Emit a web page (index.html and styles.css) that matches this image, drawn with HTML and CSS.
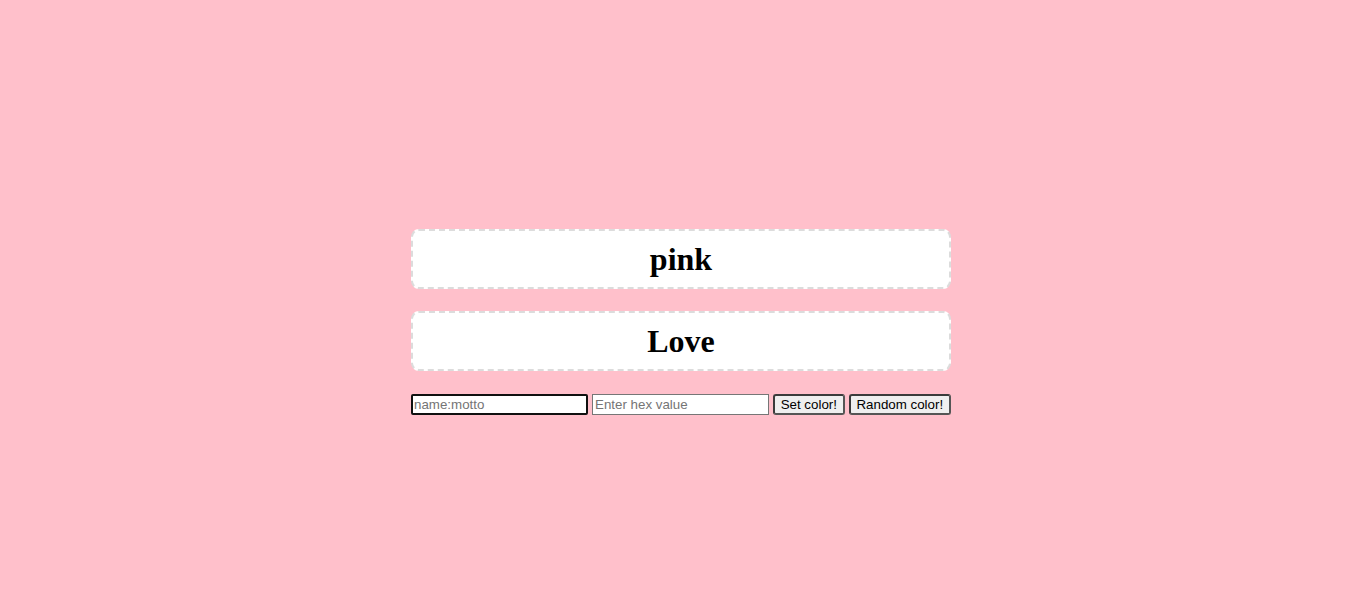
FILE: index.html
```html
<!DOCTYPE html>
<html>
<head>
<meta charset="utf-8">
<title>Color</title>
<link rel="stylesheet" href="styles.css">
</head>
<body>
<main class="wrap">
  <div class="card"><h1 class="title">pink</h1></div>
  <div class="card"><h1 class="title">Love</h1></div>
  <form class="controls">
    <input class="field focused" type="text" placeholder="name:motto">
    <input class="field" type="text" placeholder="Enter hex value">
    <button class="btn set" type="button">Set color!</button>
    <button class="btn random" type="button">Random color!</button>
  </form>
</main>
</body>
</html>
```
FILE: styles.css
```css
html, body {
  margin: 0;
  height: 100%;
  background: #ffc0cb;
}
body {
  font-family: "Liberation Serif", "Times New Roman", serif;
  display: flex;
  justify-content: center;
  padding-left: 17px;
  box-sizing: border-box;
}
.wrap {
  width: 540px;
  padding-top: 229px;
  display: flex;
  flex-direction: column;
  gap: 22px;
}
.card {
  box-sizing: border-box;
  height: 60px;
  background: #fff;
  border: 2px dashed #dcdcdc;
  border-radius: 8px;
  display: flex;
  align-items: center;
  justify-content: center;
}
.title {
  margin: 0;
  font-size: 32px;
  font-weight: bold;
  color: #000;
}
.controls {
  display: flex;
  gap: 4px;
  margin: 1px 0 0;
}
.field {
  box-sizing: border-box;
  width: 177px;
  height: 21px;
  margin: 0;
  padding: 1px 2px;
  font: 13.333px "Liberation Sans", Arial, sans-serif;
  border: 1px solid #767676;
  border-radius: 0;
  background: #fff;
}
.field::placeholder {
  color: #757575;
}
.field.focused {
  border: 2px solid #101010;
  border-radius: 2px;
  padding: 0 1px;
}
.btn {
  box-sizing: border-box;
  height: 21px;
  margin: 0;
  padding: 0;
  white-space: nowrap;
  font: 13.333px "Liberation Sans", Arial, sans-serif;
  color: #000;
  background: #efefef;
  border: 2px solid #3b3b3b;
  border-radius: 3px;
  border-right-color: #555;
  border-bottom-color: #555;
}
.set { width: 72px; }
.random { width: 103px; }
```
